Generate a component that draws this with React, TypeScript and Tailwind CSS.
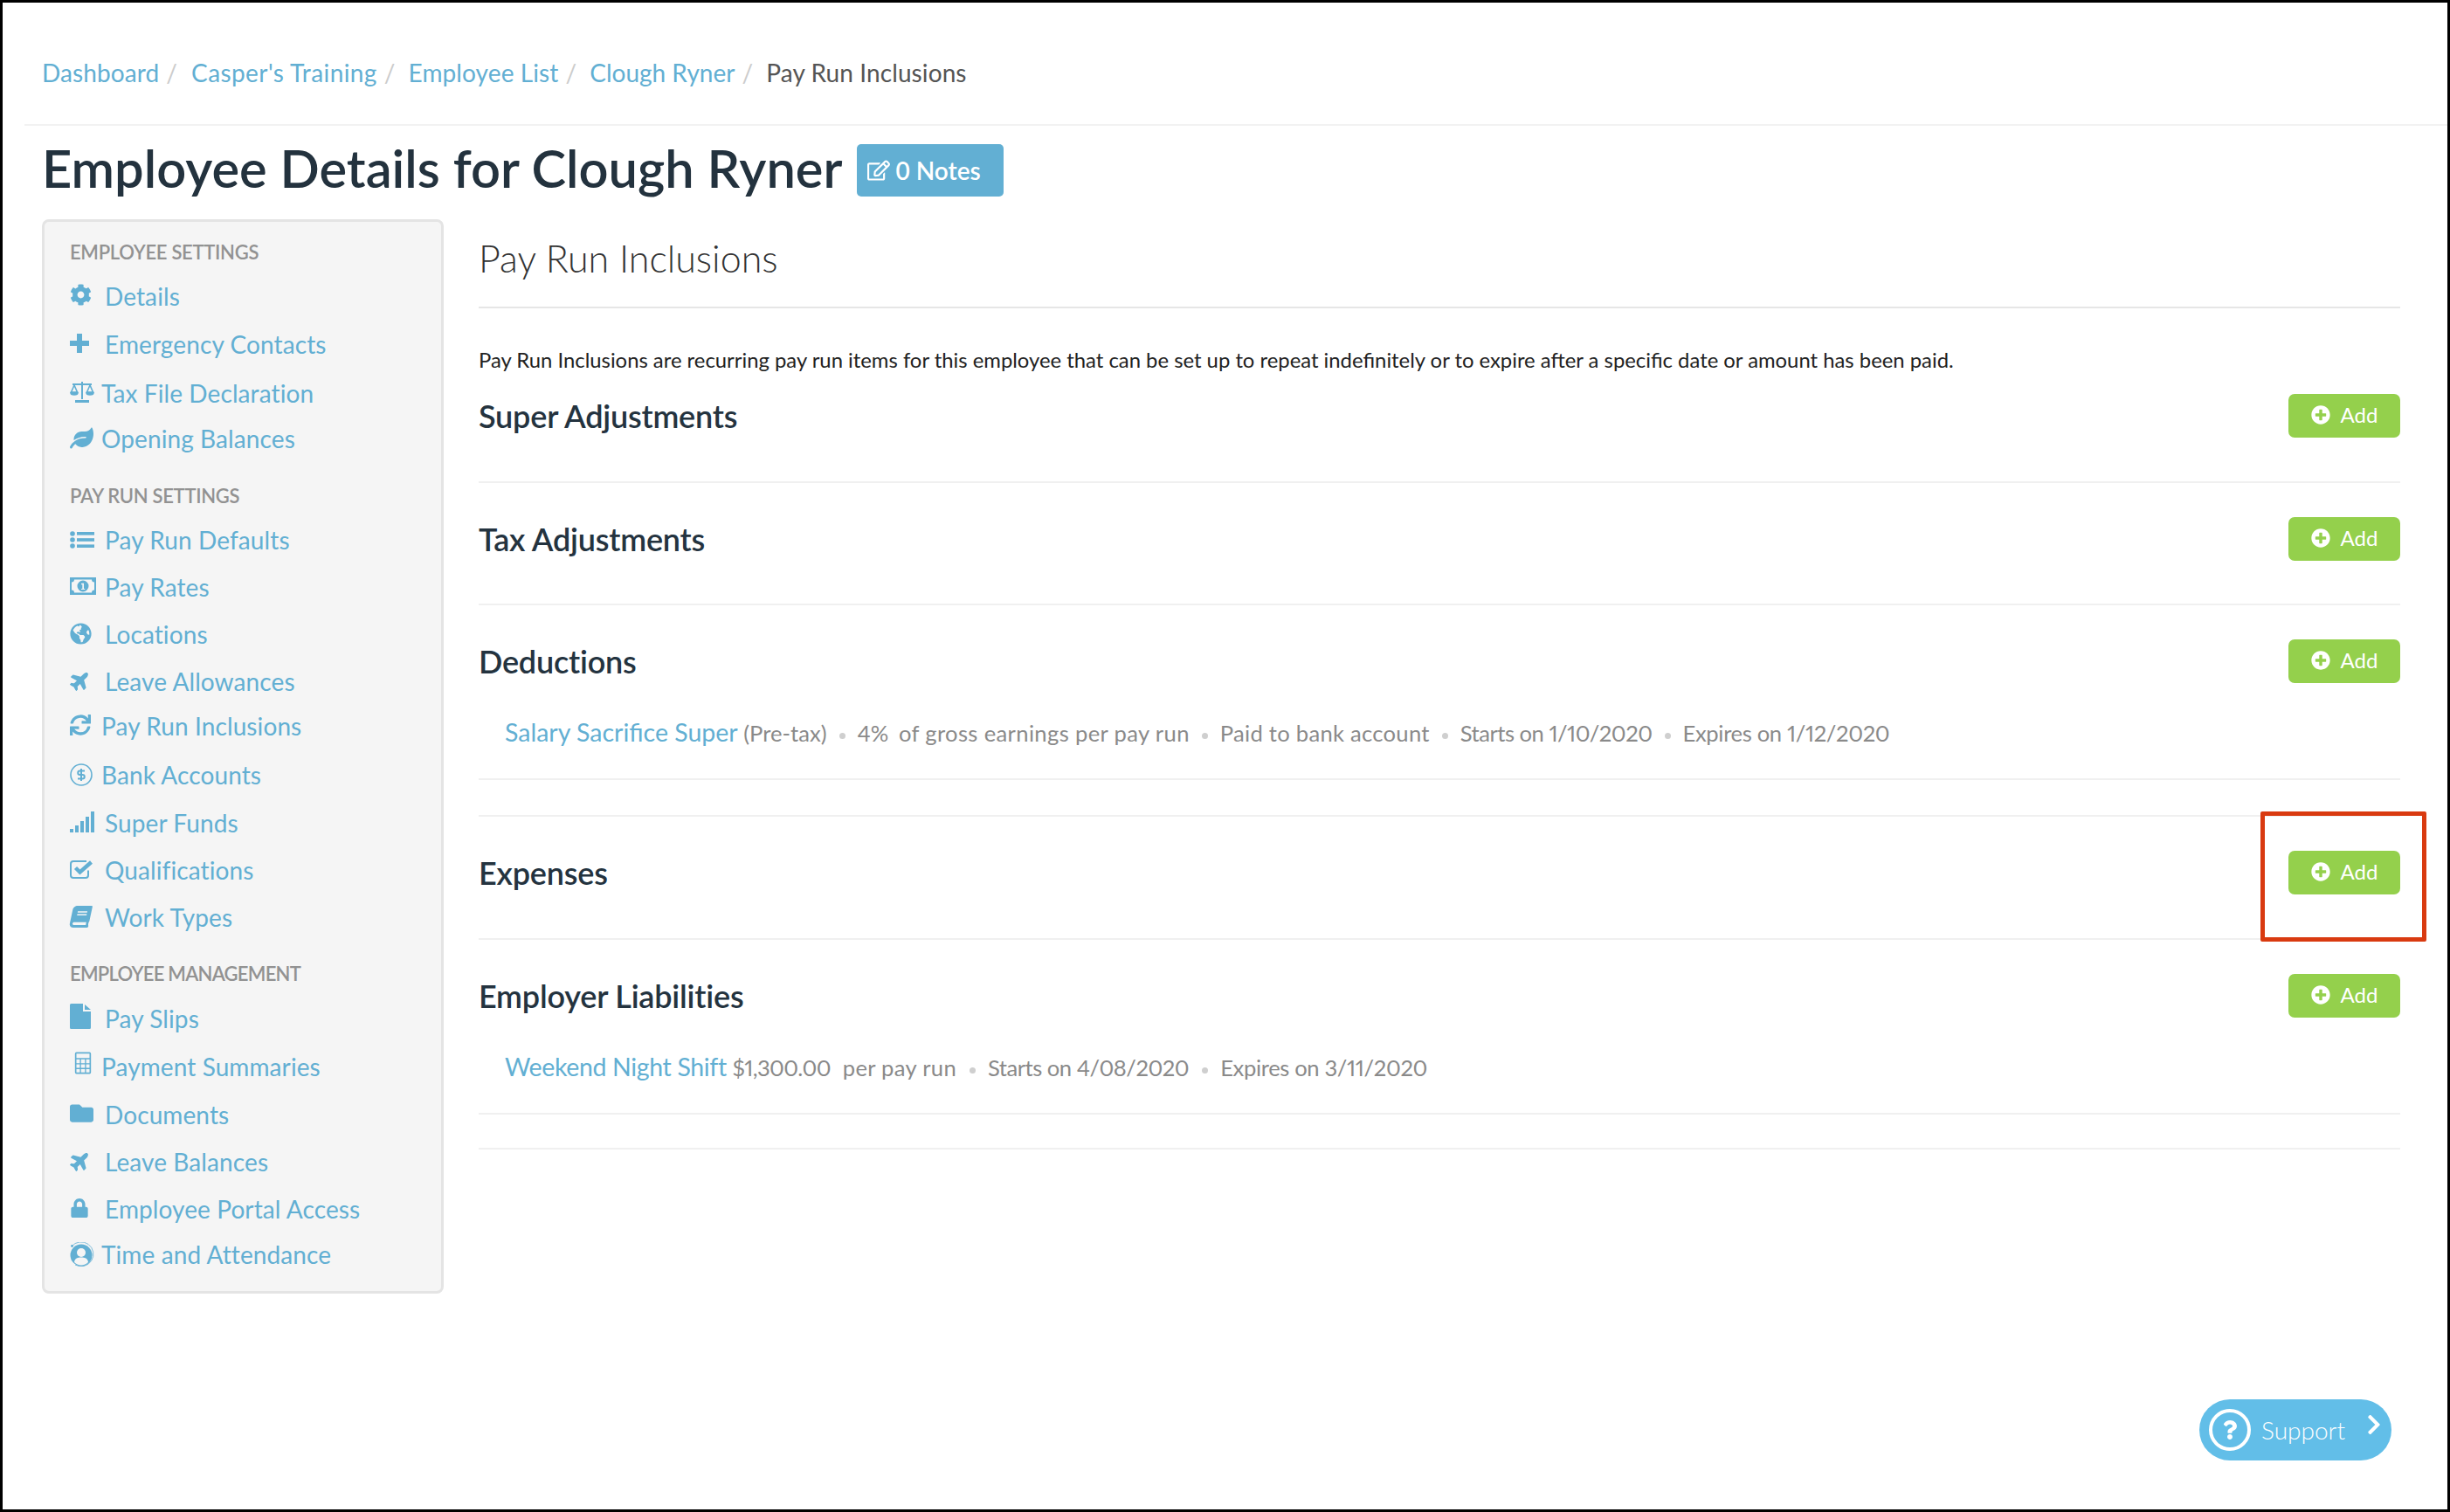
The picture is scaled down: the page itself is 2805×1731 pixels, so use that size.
import React from "react";
import {
  FaBook,
  FaChevronRight,
  FaCog,
  FaFolder,
  FaGlobeAmericas,
  FaLeaf,
  FaLock,
  FaPlane,
  FaPlusCircle,
  FaQuestion,
  FaRegEdit,
  FaSync,
} from "react-icons/fa";

const Plus = () => (
  <svg viewBox="0 0 22 22" className="w-[22px] h-[22px] -mt-[3px]" fill="currentColor">
    <path d="M8 0h6v8h8v6h-8v8H8v-8H0V8h8z" />
  </svg>
);

const Scale = () => (
  <svg viewBox="0 0 28 26" className="w-[28px] h-[26px] -mt-[3px]" fill="none" stroke="currentColor" strokeWidth="1.6">
    <path d="M14 1v20M3 4h22" strokeWidth="2" />
    <path d="M6 23.5h16" strokeWidth="3" />
    <path d="M5 5 1.5 13h7zM23 5l-3.5 8h7z" />
    <path d="M1 13.5a4 2.5 0 0 0 8 0zM19 13.5a4 2.5 0 0 0 8 0z" fill="currentColor" />
  </svg>
);

const ListIcon = () => (
  <svg viewBox="0 0 28 20" className="w-[28px] h-[20px]" fill="currentColor">
    <circle cx="3" cy="3" r="2.8" />
    <circle cx="3" cy="10" r="2.8" />
    <circle cx="3" cy="17" r="2.8" />
    <rect x="8" y="1" width="20" height="3.6" />
    <rect x="8" y="8.2" width="20" height="3.6" />
    <rect x="8" y="15.4" width="20" height="3.6" />
  </svg>
);

const Money = () => (
  <svg viewBox="0 0 30 20" className="w-[30px] h-[20px] -mt-[2px]" fill="currentColor">
    <path
      fillRule="evenodd"
      d="M0 0h30v20H0zM5 2.5a3 3 0 0 1-3 3v9a3 3 0 0 1 3 3h20a3 3 0 0 1 3-3v-9a3 3 0 0 1-3-3z"
    />
    <path fillRule="evenodd" d="M15 3.5a6.5 6.5 0 1 1 0 13 6.5 6.5 0 0 1 0-13zM13 7v1.3h1.3V13H13v1h4.2v-1H16V6.8h-1.2z" />
  </svg>
);

const Signal = () => (
  <svg viewBox="0 0 28 24" className="w-[28px] h-[24px] -mt-[3px]" fill="currentColor">
    <rect x="0" y="20" width="4" height="4" />
    <rect x="6" y="16" width="4" height="8" />
    <rect x="12" y="11" width="4" height="13" />
    <rect x="18" y="6" width="4" height="18" />
    <rect x="24" y="0" width="4" height="24" />
  </svg>
);

const CheckSquare = () => (
  <svg viewBox="0 0 27 22" className="w-[27px] h-[22px] -mt-[2px]" fill="none" stroke="currentColor">
    <path d="M21 12.5V18a3 3 0 0 1-3 3H4a3 3 0 0 1-3-3V5a3 3 0 0 1 3-3h15" strokeWidth="2" />
    <path d="m6.5 9.5 5 5L24.5 3" strokeWidth="4.4" />
  </svg>
);

const FileIcon = () => (
  <svg viewBox="0 0 24 29" className="w-[24px] h-[29px] -mt-[5px]" fill="currentColor">
    <path d="M1.5 0H15v9h9v18.5a1.5 1.5 0 0 1-1.5 1.5h-21A1.5 1.5 0 0 1 0 27.5v-26A1.5 1.5 0 0 1 1.5 0zM17 1l7 6h-7z" />
  </svg>
);

const DollarCircle = () => (
  <svg viewBox="0 0 26 26" className="w-[26px] h-[26px]" fill="none" stroke="currentColor">
    <circle cx="13" cy="13" r="12" strokeWidth="1.6" />
    <path d="M17 8.5h-5.5a2.2 2.2 0 0 0 0 4.5h3a2.2 2.2 0 0 1 0 4.5H9M13 6v14" strokeWidth="2" />
  </svg>
);

const Calculator = () => (
  <svg viewBox="0 0 24 30" className="w-[20px] h-[28px] ml-[5px] -mt-[8px]" fill="none" stroke="currentColor" strokeWidth="2">
    <rect x="2" y="1" width="20" height="28" rx="1" />
    <path d="M2 9h20M2 16h20M2 22.5h20M8.5 9v20M15.5 9v20" strokeWidth="1.6" />
  </svg>
);

const TimeUser = () => (
  <svg viewBox="0 0 28 28" className="w-[28px] h-[28px] -mt-[1px]">
    <circle cx="13" cy="15" r="12.5" fill="currentColor" />
    <path d="M2 5a14 14 0 1 1 4 21" fill="none" stroke="currentColor" strokeWidth="0.8" />
    <circle cx="13" cy="12" r="5" fill="#f5f5f5" />
    <path d="M5 23c1-5 4-5.5 8-5.5s7 .5 8 5.5a11 11 0 0 1-16 0z" fill="#f5f5f5" />
    <circle cx="2.5" cy="4.5" r="1.4" fill="currentColor" />
  </svg>
);

type NavItem = { label: string; icon: React.ReactNode; gap: string; row: string };

const nav: { title: string; className: string; titleClass: string; first: string; items: NavItem[] }[] = [
  {
    title: "EMPLOYEE SETTINGS",
    className: "",
    titleClass: "tracking-[-0.3px]",
    first: "mt-[5px]",
    items: [
      { label: "Details", icon: <FaCog size={25} className="-mt-[3px]" />, gap: "w-[40px]", row: "" },
      { label: "Emergency Contacts", icon: <Plus />, gap: "w-[40px]", row: "mt-[1px]" },
      { label: "Tax File Declaration", icon: <Scale />, gap: "w-[36px]", row: "mt-[2px]" },
      { label: "Opening Balances", icon: <FaLeaf size={27} className="-mt-[2px]" />, gap: "w-[36px]", row: "-mt-[2px]" },
    ],
  },
  {
    title: "PAY RUN SETTINGS",
    className: "mt-[21px]",
    titleClass: "tracking-[-0.3px]",
    first: "mt-[5px]",
    items: [
      { label: "Pay Run Defaults", icon: <ListIcon />, gap: "w-[40px]", row: "" },
      { label: "Pay Rates", icon: <Money />, gap: "w-[40px]", row: "" },
      { label: "Locations", icon: <FaGlobeAmericas size={25} className="-mt-[2px]" />, gap: "w-[40px]", row: "" },
      { label: "Leave Allowances", icon: <FaPlane size={24} className="-rotate-45 -mt-[2px]" />, gap: "w-[40px]", row: "" },
      { label: "Pay Run Inclusions", icon: <FaSync size={24} className="-mt-[2px]" />, gap: "w-[36px]", row: "-mt-[3px]" },
      { label: "Bank Accounts", icon: <DollarCircle />, gap: "w-[36px]", row: "mt-[2px]" },
      { label: "Super Funds", icon: <Signal />, gap: "w-[40px]", row: "mt-[1px]" },
      { label: "Qualifications", icon: <CheckSquare />, gap: "w-[40px]", row: "" },
      { label: "Work Types", icon: <FaBook size={25} className="-skew-x-12 -mt-[2px]" />, gap: "w-[40px]", row: "" },
    ],
  },
  {
    title: "EMPLOYEE MANAGEMENT",
    className: "mt-[20px]",
    titleClass: "tracking-[-0.75px]",
    first: "mt-[6px]",
    items: [
      { label: "Pay Slips", icon: <FileIcon />, gap: "w-[40px]", row: "" },
      { label: "Payment Summaries", icon: <Calculator />, gap: "w-[36px]", row: "mt-[1px]" },
      { label: "Documents", icon: <FaFolder size={27} className="-mt-[3px]" />, gap: "w-[40px]", row: "mt-[1px]" },
      { label: "Leave Balances", icon: <FaPlane size={24} className="-rotate-45 -mt-[2px]" />, gap: "w-[40px]", row: "" },
      { label: "Employee Portal Access", icon: <FaLock size={22} className="-mt-[3px]" />, gap: "w-[40px]", row: "" },
      { label: "Time and Attendance", icon: <TimeUser />, gap: "w-[36px]", row: "-mt-[2px]" },
    ],
  },
];

const AddButton = () => (
  <button className="w-[128px] h-[50px] rounded-[7px] bg-[#94d04c] text-white text-[24px] flex items-center justify-center gap-[12px]">
    <FaPlusCircle size={22} className="-mt-[2px]" />
    <span className="-mt-[2px]">Add</span>
  </button>
);

const Dot = () => <span className="inline-block w-[7px] h-[7px] rounded-full bg-[#cfcfcf] mx-[14px] align-middle" />;

const Section = ({ title, className, children }: { title: string; className: string; children?: React.ReactNode }) => (
  <div className={`pt-[39px] border-b-2 border-[#f0f0f0] ${className}`}>
    <div className="h-[50px] flex items-center justify-between">
      <h3 className="text-[36px] font-semibold text-[#24333f] tracking-[-0.2px]">{title}</h3>
      <AddButton />
    </div>
    {children}
  </div>
);

const ItemRow = ({ link, linkClass, children }: { link: string; linkClass?: string; children: React.ReactNode }) => (
  <div className="mt-[38px] h-[36px] pl-[30px] text-[25.6px] leading-[36px] text-[#8a8a8a] whitespace-nowrap proportional-nums">
    <a className={`text-[#62afd3] text-[28.5px] ${linkClass ?? ""}`}>{link}</a> {children}
  </div>
);

export default function App() {
  return (
    <div className="relative h-[1731px] overflow-hidden border-[3px] border-black bg-white pl-[25px] font-['Lato','Liberation_Sans',sans-serif]">
      <div className="h-[141px] border-b-2 border-[#f2f2f2] pl-[20px] pt-[62px] text-[28px] tracking-[0.1px] leading-[36px] text-[#ccc] flex">
        <a className="text-[#62afd3]">Dashboard</a>
        <span className="ml-[8px] mr-[16px]">/</span>
        <a className="text-[#62afd3] tracking-[0.4px]">Casper's Training</a>
        <span className="ml-[8px] mr-[15px]">/</span>
        <a className="text-[#62afd3]">Employee List</a>
        <span className="ml-[8px] mr-[15px]">/</span>
        <a className="text-[#62afd3] tracking-[0px]">Clough Ryner</a>
        <span className="ml-[8px] mr-[15px]">/</span>
        <span className="text-[#555]">Pay Run Inclusions</span>
      </div>

      <div className="h-[107px] pl-[20px] pt-[21px] flex items-start">
        <h1 className="-mt-[1px] text-[59.6px] leading-[56px] font-semibold text-[#23323e] whitespace-nowrap">Employee Details for Clough Ryner</h1>
        <button className="ml-[16px] w-[168px] h-[60px] rounded-[5px] bg-[#62afd3] text-white text-[28px] font-semibold flex items-center pl-[12px] gap-[7px]">
          <FaRegEdit size={26} />
          0 Notes
        </button>
      </div>

      <div className="flex pl-[20px] gap-[40px]">
        <aside className="w-[460px] h-[1230px] shrink-0 rounded-[8px] border-[3px] border-[#e4e4e4] bg-[#f5f5f5] pl-[29px] pt-[17px]">
          {nav.map((group) => (
            <div key={group.title} className={group.className}>
              <div className={`h-[36px] leading-[36px] text-[22px] font-semibold text-[#929292] ${group.titleClass}`}>{group.title}</div>
              <div className={group.first}>
                {group.items.map((item) => (
                  <div key={item.label} className={`flex items-center h-[54px] text-[#62afd3] text-[28px] tracking-[0.1px] ${item.row}`}>
                    <span className={`flex items-center shrink-0 ${item.gap}`}>{item.icon}</span>
                    <a>{item.label}</a>
                  </div>
                ))}
              </div>
            </div>
          ))}
        </aside>

        <main className="w-[2200px] shrink-0">
          <div className="h-[102px] border-b-2 border-[#e6e6e6] pt-[23px]">
            <h2 className="text-[43px] leading-[44px] font-light text-[#333]">Pay Run Inclusions</h2>
          </div>
          <p className="mt-[41px] h-[36px] leading-[36px] text-[23.85px] text-[#222] whitespace-nowrap">
            Pay Run Inclusions are recurring pay run items for this employee that can be set up to repeat indefinitely or to expire after a specific date or amount has been paid.
          </p>
          <div className="-mt-[18px]">
            <Section title="Super Adjustments" className="pb-[50px]" />
            <Section title="Tax Adjustments" className="pb-[49px]" />
            <Section title="Deductions" className="pb-[35px]">
              <ItemRow link="Salary Sacrifice Super">
                (Pre-tax)
                <Dot />
                <span>4%&nbsp;</span>
                <span className="ml-[5px] tracking-[0.35px]">of gross earnings per pay run</span>
                <Dot />
                <span className="tracking-[0.27px]">Paid to bank account</span>
                <Dot />
                <span className="tracking-[-0.5px]">Starts on 1/10/2020</span>
                <Dot />
                <span className="tracking-[-0.36px]">Expires on 1/12/2020</span>
              </ItemRow>
            </Section>
            <div className="h-[42px] border-b-2 border-[#f0f0f0]" />
            <Section title="Expenses" className="pb-[50px]" />
            <Section title="Employer Liabilities" className="pb-[35px]">
              <ItemRow link="Weekend Night Shift" linkClass="tracking-[-0.35px]">
                <span className="tracking-[-0.6px]">$1,300.00</span>
                <span className="tracking-[0.3px]">&nbsp; per pay run</span>
                <span className="ml-[1px]"><Dot /></span>
                <span className="tracking-[-0.5px]">Starts on 4/08/2020</span>
                <span className="ml-[1px]"><Dot /></span>
                <span className="tracking-[-0.36px]">Expires on 3/11/2020</span>
              </ItemRow>
            </Section>
            <div className="h-[40px] border-b-2 border-[#f0f0f0]" />
          </div>
        </main>
      </div>

      {/* red annotation round the Expenses button */}
      <div className="absolute left-[2585px] top-[926px] w-[190px] h-[149px] border-[5px] border-[#d93a10] rounded-[2px]" />

      <div className="absolute left-[2515px] top-[1599px] w-[220px] h-[70px] rounded-full bg-[#62bee8] text-white flex items-center pl-[11px]">
        <span className="w-[48px] h-[48px] rounded-full border-[4px] border-white flex items-center justify-center">
          <FaQuestion size={22} />
        </span>
        <span className="ml-[12px] text-[28px] font-light">Support</span>
        <FaChevronRight size={26} className="ml-[20px] -mt-[12px]" />
      </div>
    </div>
  );
}
